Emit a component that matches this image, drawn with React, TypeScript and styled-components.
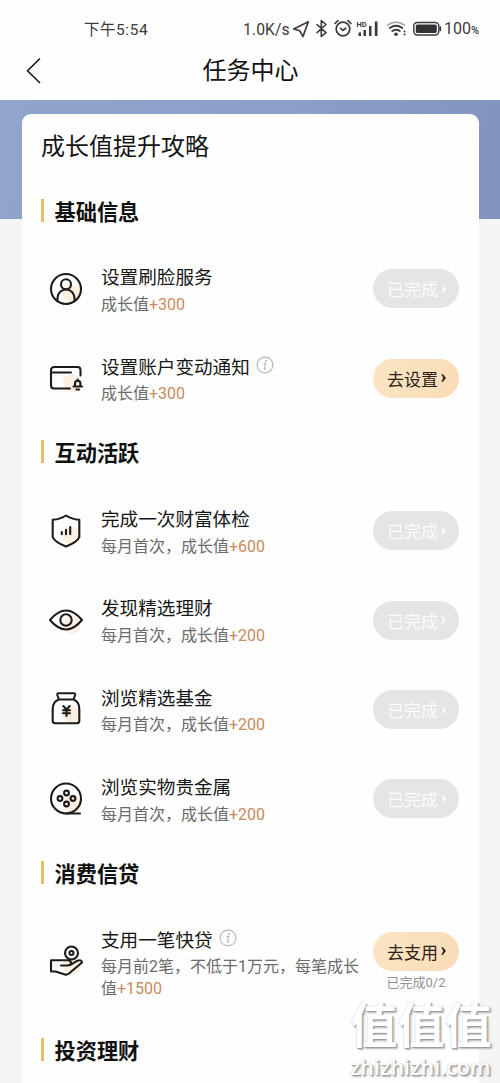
import React from "react";
import styled, { createGlobalStyle } from "styled-components";

const GlobalStyle = createGlobalStyle`
  * { box-sizing: border-box; }
  body {
    margin: 0;
    background: #f5f5f5;
    font-family: Roboto, "Noto Sans CJK SC", sans-serif;
    color: #161616;
  }
`;

const Screen = styled.div`
  position: relative;
  width: 500px;
  height: 1083px;
  overflow: hidden;
  background: linear-gradient(100deg, #90a4cc, #8b9fc8 55%, #8094bf) 0 100px / 500px 119px no-repeat #f5f5f5;
`;

const Header = styled.header`
  height: 100px;
  background: #fefefe;
`;

const StatusBar = styled.div`
  display: flex;
  justify-content: space-between;
  align-items: center;
  height: 42px;
  padding: 16px 20px 0 84px;
  font-size: 16px;
  line-height: 24px;
  color: #3b3b3b;
`;

const Time = styled.span`
  padding-top: 1px;
  font-size: 15.5px;
  letter-spacing: 0.55px;
`;

const StatusGroup = styled.div`
  display: flex;
  align-items: center;
`;

const Speed = styled.span`
  width: 49px;
  padding-top: 2px;
  font-size: 15.7px;
  letter-spacing: 0.1px;
  white-space: nowrap;
`;

const Percent = styled.span`
  width: 36px;
  padding-top: 2px;
  font-size: 16px;
  white-space: nowrap;
  small { font-size: 11px; font-weight: 500; }
`;

const NavBar = styled.div`
  display: grid;
  grid-template-columns: 60px 1fr 60px;
  align-items: center;
  height: 58px;
`;

const BackIcon = styled.svg`
  margin: 0 0 3px 24px;
`;

const NavTitle = styled.h1`
  margin: 0;
  padding-left: 1px;
  text-align: center;
  font-size: 24px;
  line-height: 36px;
  font-weight: 400;
  color: #111;
`;

const Card = styled.main`
  width: 457px;
  height: 1000px;
  margin: 14px 0 0 22px;
  padding: 15px 20px 0 19px;
  border-radius: 9px;
  background: #fefefe;
`;

const CardTitle = styled.h2`
  margin: 0;
  height: 51px;
  font-size: 24px;
  line-height: 36px;
  font-weight: 400;
  color: #151515;
`;

const SectionTitle = styled.h3`
  display: flex;
  align-items: center;
  gap: 10.5px;
  height: 60px;
  margin: 0 0 4.2px;
  font-size: 21.2px;
  font-weight: 700;
  color: #111;
  &::before {
    content: "";
    width: 3px;
    height: 23px;
    background: #e9bd68;
  }
`;

const Section = styled.section`
  margin-bottom: -1px;
`;

const Row = styled.div<{ $tall?: boolean }>`
  display: grid;
  grid-template-columns: 60px 1fr 86px;
  height: ${(p) => (p.$tall ? 113.4 : 89.35)}px;
`;

const TaskIcon = styled.svg<{ $low?: boolean }>`
  margin: ${(p) => (p.$low ? 34 : 24.6)}px 0 0 4.5px;
  overflow: visible;
`;

const Copy = styled.div`
  padding-top: 17.5px;
`;

const TaskName = styled.div`
  display: flex;
  align-items: center;
  gap: 6px;
  height: 28px;
  font-size: 18.6px;
  white-space: nowrap;
`;

const Note = styled.div`
  width: 264px;
  padding-top: 4px;
  font-size: 16px;
  line-height: 22px;
  color: #6b6b6b;
`;

const Points = styled.span`
  color: #c98a5c;
`;

const Action = styled.div`
  padding-top: 25.3px;
  text-align: center;
`;

const Pill = styled.button<{ $done?: boolean }>`
  display: flex;
  align-items: center;
  justify-content: center;
  gap: 3px;
  width: 86px;
  height: 39px;
  padding: 0 0 0 1px;
  border: 0;
  border-radius: 20px;
  font: inherit;
  font-size: 17px;
  color: ${(p) => (p.$done ? "#fbfbfb" : "#2b2118")};
  background: ${(p) => (p.$done ? "#e5e5e5" : "linear-gradient(110deg, #fce5c4, #f8dcb6)")};
`;

const Progress = styled.div`
  margin-top: 3px;
  font-size: 13px;
  line-height: 18px;
  color: #929292;
`;

const Watermark = styled.div`
  position: absolute;
  left: 350px;
  top: 1000px;
  width: 146px;
  color: #fff;
  text-shadow: 1px 1px 1px #999, 2px 2px 2px #bbb, 0 0 1px #bbb;
  white-space: nowrap;
`;

const WatermarkName = styled.div`
  font-size: 47.3px;
  line-height: 54px;
  font-weight: 700;
`;

const WatermarkSite = styled.div`
  font-family: "Open Sans", sans-serif;
  font-size: 21.6px;
  line-height: 26px;
  font-weight: 600;
`;

type IconName = "face" | "card" | "shield" | "eye" | "bag" | "reel" | "hand";

const drawings: Record<IconName, React.ReactNode> = {
  face: (
    <>
      <circle cx="20" cy="20" r="15" />
      <circle cx="20" cy="15.2" r="5" />
      <path d="M11.5 32v-3a8.5 8.5 0 0 1 17 0v3" />
    </>
  ),
  card: (
    <>
      <path d="M34.5 17.500V12a3 3 0 0 0-3-3H8a3 3 0 0 0-3 3v15.500a3 3 0 0 0 3 3h16M5 14.500h20" />
      <path d="M29 28.500v-3a2.700 2.700 0 0 1 5.400 0v3M27.500 28.500h8.500M30.400 31.500h2.800M31.700 21.500v.5" />
    </>
  ),
  shield: (
    <>
      <path d="M20 4.500Q25.500 8.200 33.300 8.800V26Q31.500 31 20 35.500Q8.500 31 6.700 26V8.800Q14.500 8.200 20 4.500z" />
      <path d="M15.800 23.300v-2.200M20 23.300v-4.400M24.200 23.300v-7.200" />
    </>
  ),
  eye: (
    <>
      <path d="M4 20Q12 10.500 20 10.500T36 20Q28 29.500 20 29.500T4 20z" />
      <circle cx="20" cy="20" r="5.700" />
    </>
  ),
  bag: (
    <>
      <path d="M13 10.500 11.300 6Q11 4.300 12.500 4.300h15.300q1.700 0 1.300 1.700L27.500 10.500H13Q6.700 12.500 6.700 20v11.800a2.500 2.500 0 0 0 2.500 2.500h21.600a2.500 2.500 0 0 0 2.500-2.500V20q0-7.500-5.800-9.500" />
      <path d="m17.300 17 3.200 3.500 3.200-3.500M20.500 20.500v6.500M17 21.300h7M17 24.200h7" />
    </>
  ),
  reel: (
    <>
      <circle cx="20" cy="19.500" r="15" />
      <path d="M20 34.500h14" />
      <circle cx="20.500" cy="14" r="2.400" />
      <circle cx="20.500" cy="25" r="2.400" />
      <circle cx="14" cy="19.500" r="2.400" />
      <circle cx="27" cy="19.500" r="2.400" />
    </>
  ),
  hand: (
    <>
      <circle cx="25.500" cy="12" r="6.500" />
      <circle cx="25.500" cy="12" r="2" />
      <path d="M15 24.500h6.500q3.500 0 3.500-2.500t-3.500-2.700H5V30.500h4.500l9.500 3q2 .6 4-1l13-11q-.5-3.300-4.500-1.800L25 23.500" />
    </>
  ),
};

function LineIcon({ name, low }: { name: IconName; low?: boolean }) {
  return (
    <TaskIcon $low={low} width="40" height="40" viewBox="0 0 40 40" fill="none">
      <circle cx="26" cy="25" r="9" fill="#fdefe2" />
      <g stroke="#1c1c1c" strokeWidth="2.100" strokeLinecap="round" strokeLinejoin="round">
        {drawings[name]}
      </g>
    </TaskIcon>
  );
}

function InfoIcon() {
  return (
    <svg width="18" height="18" viewBox="0 0 18 18" fill="none" stroke="#b9b9b9" strokeLinecap="round">
      <circle cx="9" cy="9" r="7.900" strokeWidth="1.200" />
      <path d="M8 7.400h1.600L8.300 13q0 .8 1.300 0" strokeWidth="1.200" />
      <circle cx="10" cy="4.800" r=".5" fill="#aaa" />
    </svg>
  );
}

function Arrow() {
  return (
    <svg width="5" height="8" viewBox="0 0 5 8" fill="currentColor">
      <path d="M.3.300h1.700L4.900 4 2 7.700H.3L2.300 4z" />
    </svg>
  );
}

interface Task {
  icon: IconName;
  name: string;
  note: string;
  points: string;
  action?: string;
  info?: boolean;
  progress?: string;
}

const sections: { title: string; tasks: Task[] }[] = [
  {
    title: "基础信息",
    tasks: [
      { icon: "face", name: "设置刷脸服务", note: "成长值", points: "+300" },
      { icon: "card", name: "设置账户变动通知", note: "成长值", points: "+300", action: "去设置", info: true },
    ],
  },
  {
    title: "互动活跃",
    tasks: [
      { icon: "shield", name: "完成一次财富体检", note: "每月首次，成长值", points: "+600" },
      { icon: "eye", name: "发现精选理财", note: "每月首次，成长值", points: "+200" },
      { icon: "bag", name: "浏览精选基金", note: "每月首次，成长值", points: "+200" },
      { icon: "reel", name: "浏览实物贵金属", note: "每月首次，成长值", points: "+200" },
    ],
  },
  {
    title: "消费信贷",
    tasks: [
      {
        icon: "hand",
        name: "支用一笔快贷",
        note: "每月前2笔，不低于1万元，每笔成长值",
        points: "+1500",
        action: "去支用",
        info: true,
        progress: "已完成0/2",
      },
    ],
  },
  { title: "投资理财", tasks: [] },
];

function TaskRow({ task }: { task: Task }) {
  return (
    <Row $tall={!!task.progress}>
      <LineIcon name={task.icon} low={!!task.progress} />
      <Copy>
        <TaskName>
          {task.name}
          {task.info && <InfoIcon />}
        </TaskName>
        <Note>
          {task.note}
          <Points>{task.points}</Points>
        </Note>
      </Copy>
      <Action>
        <Pill $done={!task.action}>
          {task.action ?? "已完成"}
          <Arrow />
        </Pill>
        {task.progress && <Progress>{task.progress}</Progress>}
      </Action>
    </Row>
  );
}

function StatusIcons() {
  return (
    <svg width="152" height="24" viewBox="292 17 152 24" fill="none" stroke="#3b3b3b" strokeWidth="1.700" strokeLinejoin="round" strokeLinecap="round">
      <path d="M308.300 21.800 293.800 29l6 1.800 3.200 5.700z" />
      <path d="m317 24.500 9 8.200-4.700 3.800V20.500l4.700 4-9 8.200" strokeWidth="1.600" />
      <circle cx="343" cy="29" r="6.800" />
      <path d="m340.500 28.300 2.500 2 2.800-2M335 23.500l3-2.800M351 23.500l-3-2.800" />
      <g stroke="none" fill="#3b3b3b">
        <text x="356.500" y="26.500" fontFamily="Roboto, sans-serif" fontSize="7.500" fontWeight="700">HD</text>
        <rect x="358.500" y="32.500" width="2.500" height="3.500" />
        <rect x="363.500" y="30" width="2.500" height="6" />
        <rect x="369" y="26" width="2.500" height="10" />
        <rect x="374.800" y="21.500" width="2.700" height="14.500" />
        <circle cx="396" cy="34.200" r="1.800" />
        <circle cx="404.500" cy="31.500" r="1" />
        <circle cx="404.500" cy="34.500" r="1" />
      </g>
      <path d="M387.500 25.200q8.500-6 17 0" stroke="#aaa" />
      <path d="M389.800 28q6.200-4.500 12.500 0M392.300 31q3.700-2.600 7.500 0" strokeWidth="2" />
      <rect x="413.800" y="22.500" width="25" height="12.500" rx="3.500" strokeWidth="1.400" />
      <rect x="415.800" y="24.400" width="21" height="8.700" rx="1.500" fill="#333" stroke="none" />
      <path d="M440.300 27v3.500" />
    </svg>
  );
}

export default function App() {
  return (
    <>
      <GlobalStyle />
      <Screen>
        <Header>
          <StatusBar>
            <Time>下午5:54</Time>
            <StatusGroup>
              <Speed>1.0K/s</Speed>
              <StatusIcons />
              <Percent>
                100<small>%</small>
              </Percent>
            </StatusGroup>
          </StatusBar>
          <NavBar>
            <BackIcon width="20" height="28" viewBox="0 0 20 28" fill="none" stroke="#111" strokeWidth="1.500">
              <path d="M16 2.500 3.500 14.700 16 27" />
            </BackIcon>
            <NavTitle>任务中心</NavTitle>
          </NavBar>
        </Header>
        <Card>
          <CardTitle>成长值提升攻略</CardTitle>
          {sections.map((section) => (
            <Section key={section.title}>
              <SectionTitle>{section.title}</SectionTitle>
              {section.tasks.map((task) => (
                <TaskRow key={task.name} task={task} />
              ))}
            </Section>
          ))}
        </Card>
        <Watermark>
          <WatermarkName>值值值</WatermarkName>
          <WatermarkSite>zhizhizhi.com</WatermarkSite>
        </Watermark>
      </Screen>
    </>
  );
}
